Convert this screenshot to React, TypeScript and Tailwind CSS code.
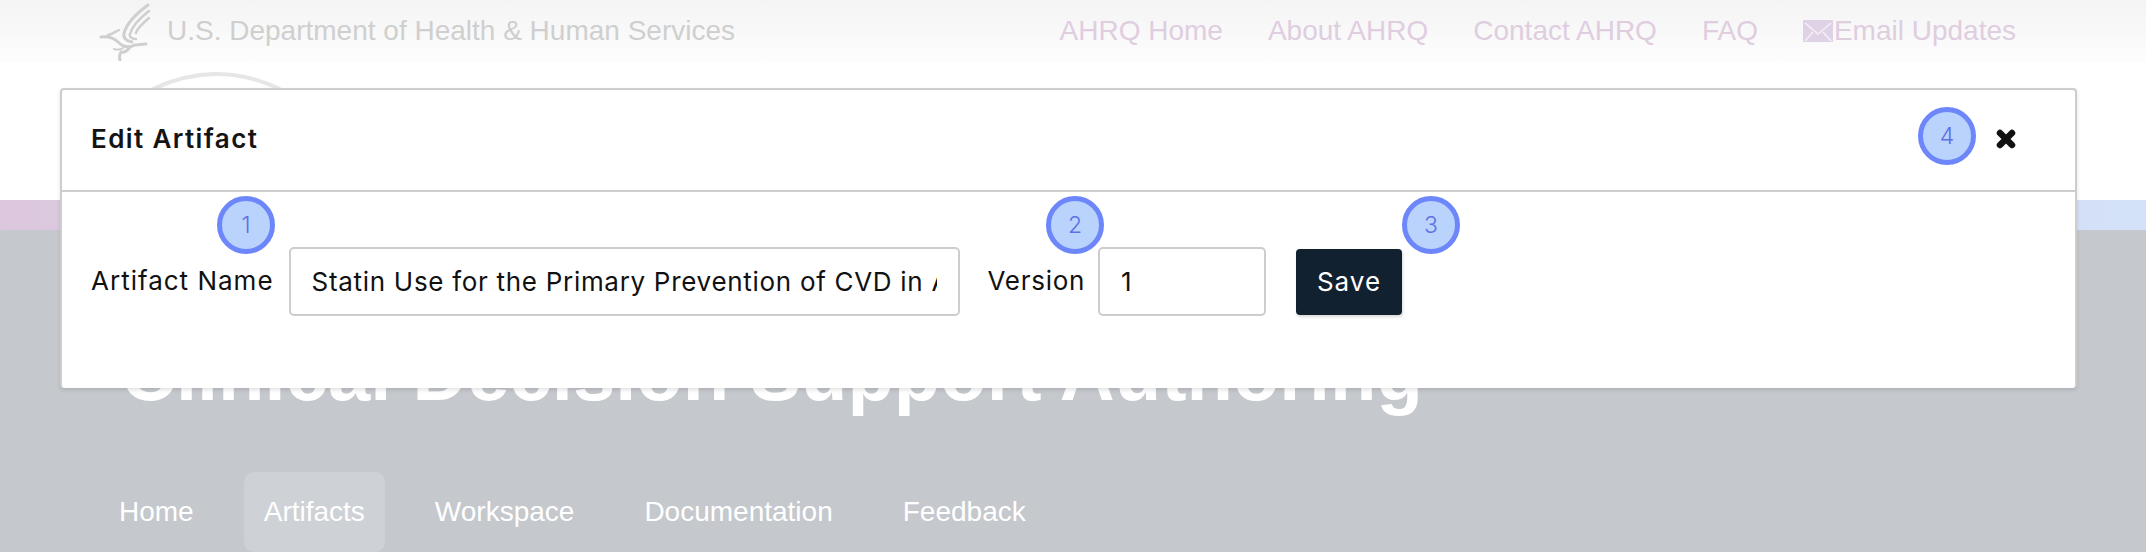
import React from "react";

const sans = "font-['Liberation_Sans',Arial,sans-serif]";
const ui = "font-['Inter','Noto_Sans',sans-serif]";

function Eagle() {
  return (
    <svg width="52" height="60" viewBox="0 0 52 60" fill="none" stroke="#cfcfcf" strokeLinecap="round" className="shrink-0">
      <path d="M49 4 C38 12 28 22 25 32 C24 37 27 40 33 41" strokeWidth="3" />
      <path d="M50 10 C41 17 33 26 31 33 C30 36 33 38 37 38" strokeWidth="2.5" />
      <path d="M50 17 C44 22 38 28 37 32" strokeWidth="2.5" />
      <path d="M2 36 C9 35 14 36 19 41 C24 46 30 47 36 44 L47 43" strokeWidth="3" />
      <path d="M20 29 C16 31 13 33 9 34" strokeWidth="2.5" />
      <path d="M31 46 C28 50 25 52 22 51 C20 54 20 56 21 59" strokeWidth="3" />
      <path d="M15 48 C18 49 21 49 24 47" strokeWidth="2" />
    </svg>
  );
}

function Marker({ n, className }: { n: number; className: string }) {
  return (
    <div
      className={`absolute flex h-[58px] w-[58px] items-center justify-center rounded-full border-[5px] border-[#6d87fb] bg-[#b9d3fd] text-[23px] font-light text-[#5d70e4] ${ui} ${className}`}
    >
      {n}
    </div>
  );
}

const field = "h-[69px] rounded-[5px] border-2 border-[#cdcdcd] bg-white px-[21px] tracking-[0.7px] text-[#111] outline-none";

export default function App() {
  return (
    <div className="relative h-[552px] w-[2146px] overflow-hidden bg-white">
      {/* page behind the modal */}
      <div className={`flex h-[62px] items-center justify-between bg-gradient-to-b from-[#f4f4f4] to-[#fdfdfd] pl-[99px] pr-[130px] text-[28px] ${sans}`}>
        <div className="flex items-center gap-[16px] text-[#cfcfcf]">
          <Eagle />
          <span>U.S. Department of Health &amp; Human Services</span>
        </div>
        <div className="flex items-center gap-[45px] text-[#dfcde0]">
          <span>AHRQ Home</span>
          <span>About AHRQ</span>
          <span>Contact AHRQ</span>
          <span>FAQ</span>
          <span className="flex items-center">
            <svg width="30" height="22" viewBox="0 0 30 22" className="mr-[1px]">
              <rect width="30" height="22" fill="#e0d2e6" />
              <path d="M2 3 L15 14 L28 3 M2 21 L10 12 M28 21 L20 12" stroke="#f5eff6" strokeWidth="1.5" fill="none" />
            </svg>
            Email Updates
          </span>
        </div>
      </div>
      <div className="flex h-[138px] justify-start pl-[146px] pt-[10px]">
        <svg width="140" height="40" viewBox="0 0 140 40" fill="none">
          <path d="M7 17 Q70.5 -13 134 17" stroke="#e6e6e6" strokeWidth="4" />
        </svg>
      </div>
      <div className="h-[30px] bg-gradient-to-r from-[#dcc7de] via-[#d8d4ec] to-[#d3e1f9]" />
      <div className={`h-[322px] bg-[#c5c8cd] text-white ${sans}`}>
        <div className="pl-[121px] pt-[100px] text-[76px] font-bold leading-[88px]">Clinical Decision Support Authoring</div>
        <div className="mt-[54px] flex gap-[30px] pl-[99px] text-[28px]">
          <span className="px-[20px] pt-[19px]">Home</span>
          <span className="h-[80px] rounded-[10px] bg-[#ced1d5] px-[20px] pt-[19px]">Artifacts</span>
          <span className="px-[20px] pt-[19px]">Workspace</span>
          <span className="px-[20px] pt-[19px]">Documentation</span>
          <span className="px-[20px] pt-[19px]">Feedback</span>
        </div>
      </div>

      {/* modal */}
      <div className={`absolute left-[60px] top-[88px] h-[300px] w-[2017px] rounded-[4px] border-2 border-[#cdcdcd] border-b-0 bg-white shadow-[0_2px_4px_rgba(0,0,0,0.12)] ${ui}`}>
        <div className="flex h-[102px] items-center justify-between border-b-2 border-[#cdcdcd] pl-[29px] pr-[59px] pb-[3px]">
          <div className="text-[26px] font-semibold leading-none tracking-[1.4px] text-[#141414]">Edit Artifact</div>
          <svg width="20" height="20" viewBox="0 0 20 20">
            <path d="M4 4 L16 16 M16 4 L4 16" stroke="#111" strokeWidth="6.5" strokeLinecap="round" />
          </svg>
        </div>
        <div className="flex items-center pl-[29px] pt-[55px] text-[26px] tracking-[1px] text-[#111]">
          <span className="mr-[15px] -mt-[2px]">Artifact Name</span>
          <input readOnly value="Statin Use for the Primary Prevention of CVD in Adults" className={`mr-[28px] w-[671px] ${field}`} />
          <span className="mr-[13px] -mt-[2px] tracking-[0.7px]">Version</span>
          <input readOnly value="1" className={`mr-[30px] w-[168px] ${field}`} />
          <div className="flex h-[66px] w-[106px] items-center justify-center rounded-[4px] bg-[#122130] text-white shadow-[1px_2px_3px_rgba(0,0,0,0.15)]">Save</div>
        </div>
        <Marker n={1} className="left-[155px] top-[106px]" />
        <Marker n={2} className="left-[984px] top-[106px]" />
        <Marker n={3} className="left-[1340px] top-[106px]" />
        <Marker n={4} className="left-[1856px] top-[17px]" />
      </div>
    </div>
  );
}
